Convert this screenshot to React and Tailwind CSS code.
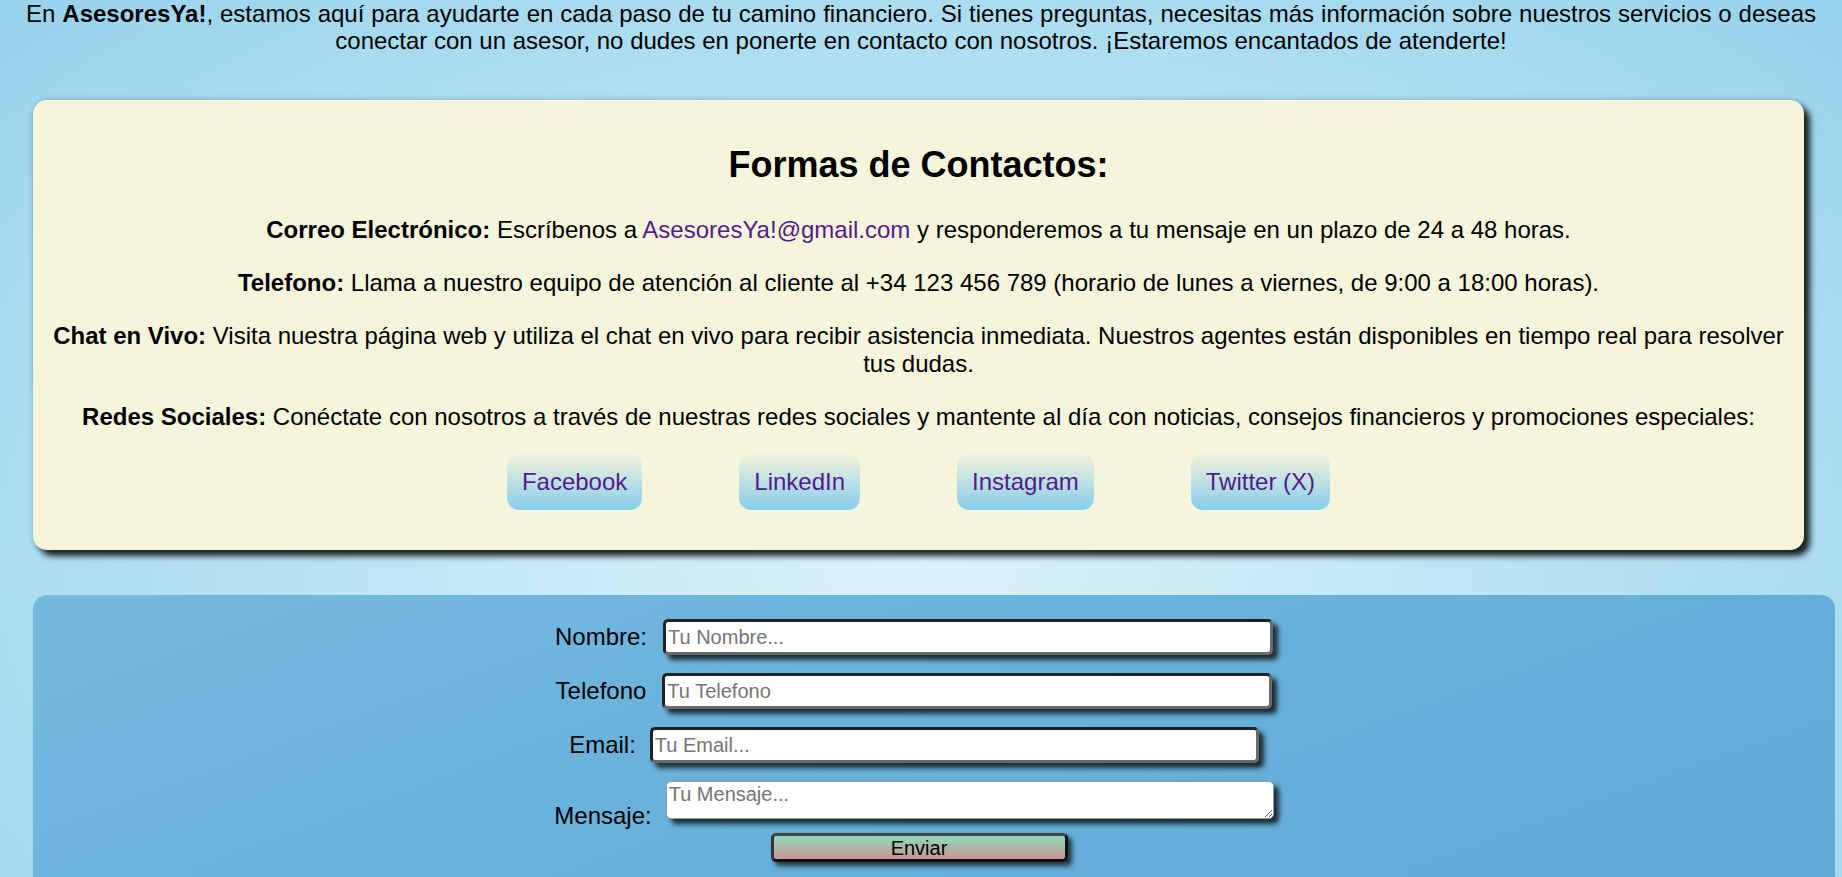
export default function App() {
  const inputCls =
    "h-[36px] w-[610px] rounded-[5px] border-[3px] border-solid border-t-[#222] border-l-[#222] border-r-[#6a6a6a] border-b-[#6a6a6a] bg-white px-[2px] text-[20px] text-black outline-none placeholder:text-[#757575] shadow-[5px_5px_5px_rgba(0,0,0,0.75)] font-['Liberation_Sans',Arial,sans-serif]";
  const socials = ["Facebook", "LinkedIn", "Instagram", "Twitter (X)"];
  return (
    <div className="h-[877px] overflow-hidden bg-[radial-gradient(ellipse_at_50%_64%,#dcf2fa_0%,#bfe6f5_40%,#97d3ec_100%)] font-['Liberation_Sans',Arial,sans-serif] text-black">
      <p className="px-[26px] text-justify [text-align-last:center] text-[24px] leading-[27px]">
        En <b>AsesoresYa!</b>, estamos aquí para ayudarte en cada paso de tu camino financiero. Si tienes preguntas, necesitas más información sobre nuestros servicios o deseas conectar con un asesor, no dudes en ponerte en contacto con nosotros. ¡Estaremos encantados de atenderte!
      </p>

      <section className="ml-[33px] mt-[46px] w-[1771px] rounded-[14px] bg-[#f5f5dc] px-[20px] pt-[44px] pb-[40px] text-center shadow-[6px_6px_6px_rgba(0,0,0,0.85),0_0_6px_rgba(0,0,0,0.2)]">
        <h2 className="text-[36px] font-bold leading-[41px]">Formas de Contactos:</h2>
        <div className="mt-[31px] flex flex-col gap-[25px] text-[24px] leading-[28px]">
          <p>
            <b>Correo Electrónico:</b> Escríbenos a{" "}
            <span className="text-[#551a8b]">AsesoresYa!@gmail.com</span> y responderemos a tu mensaje en un plazo de 24 a 48 horas.
          </p>
          <p>
            <b>Telefono:</b> Llama a nuestro equipo de atención al cliente al +34 123 456 789 (horario de lunes a viernes, de 9:00 a 18:00 horas).
          </p>
          <p>
            <b>Chat en Vivo:</b> Visita nuestra página web y utiliza el chat en vivo para recibir asistencia inmediata. Nuestros agentes están disponibles en tiempo real para resolver tus dudas.
          </p>
          <p>
            <b>Redes Sociales:</b> Conéctate con nosotros a través de nuestras redes sociales y mantente al día con noticias, consejos financieros y promociones especiales:
          </p>
        </div>
        <div className="mt-[23px] flex justify-center gap-[97px]">
          {socials.map((s) => (
            <span
              key={s}
              className="flex h-[56px] items-center rounded-[12px] bg-[linear-gradient(to_bottom,#f2f3dc,#87ceeb)] px-[15px] text-[24px] text-[#551a8b]"
            >
              {s}
            </span>
          ))}
        </div>
      </section>

      <form className="ml-[33px] mt-[45px] flex h-[400px] w-[1802px] flex-col items-center rounded-[14px] bg-[linear-gradient(160deg,#76b9df_0%,#66b0da_50%,#5ea9d6_100%)] pt-[24px] pr-[40px]">
        <div className="flex flex-col items-center gap-[18px]">
          <div className="flex items-center gap-[16px]">
            <label className="text-[24px]">Nombre:</label>
            <input className={inputCls} placeholder="Tu Nombre..." />
          </div>
          <div className="flex items-center gap-[16px]">
            <label className="text-[24px]">Telefono</label>
            <input className={inputCls} placeholder="Tu Telefono" />
          </div>
          <div className="flex items-center gap-[14px]">
            <label className="text-[24px]">Email:</label>
            <input className={inputCls.replace("w-[610px]", "w-[609px]")} placeholder="Tu Email..." />
          </div>
          <div className="flex items-end gap-[14px]">
            <label className="mb-[-11px] text-[24px] leading-[28px]">Mensaje:</label>
            <textarea
              className="block h-[38px] w-[608px] rounded-[5px] border border-[#999] bg-white px-[2px] py-[1px] text-[20px] leading-[23px] outline-none placeholder:text-[#757575] shadow-[5px_5px_5px_rgba(0,0,0,0.75)] font-['Liberation_Sans',Arial,sans-serif]"
              placeholder="Tu Mensaje..."
            />
          </div>
        </div>
        <button
          type="button"
          className="ml-[10px] mt-[14px] h-[29px] w-[297px] rounded-[5px] border-[3px] border-solid border-t-[#444] border-l-[#333] border-r-[#111] border-b-[#111] bg-[linear-gradient(to_bottom,#8fdcbc,#cc9494)] text-[20px] leading-[20px] text-black shadow-[4px_4px_5px_rgba(0,0,0,0.7)] font-['Liberation_Sans',Arial,sans-serif]"
        >
          Enviar
        </button>
      </form>
    </div>
  );
}
